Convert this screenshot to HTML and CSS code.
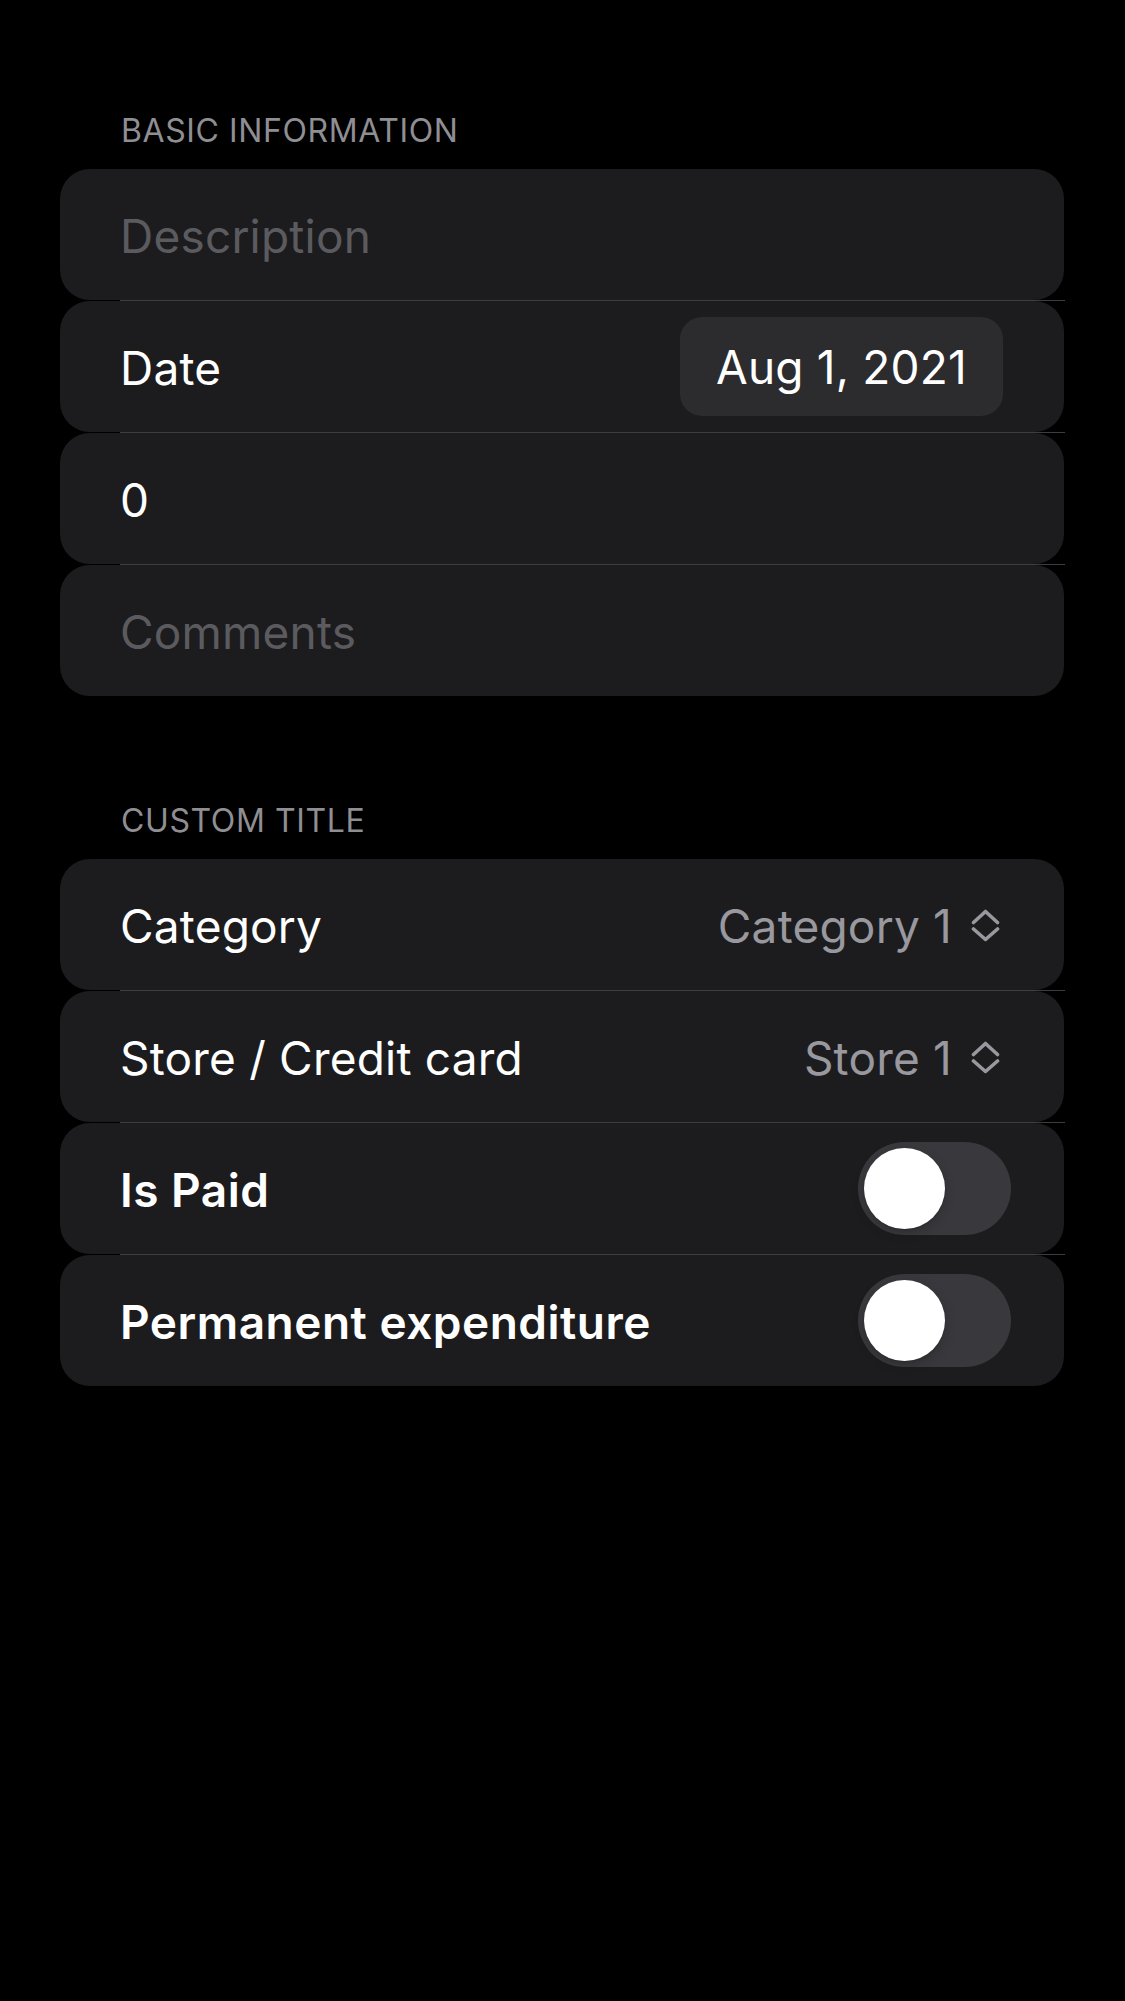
FILE: index.html
```html
<!DOCTYPE html>
<html lang="en">
<head>
<meta charset="utf-8">
<title>Expense form</title>
<link rel="stylesheet" href="styles.css">
</head>
<body>
<main class="form">
  <section class="group">
    <h2 class="group-title">BASIC INFORMATION</h2>
    <div class="rows">
      <div class="row"><span class="placeholder">Description</span></div>
      <div class="sep"></div>
      <div class="row">
        <span class="label">Date</span>
        <span class="pill">Aug 1, 2021</span>
      </div>
      <div class="sep"></div>
      <div class="row"><span class="label">0</span></div>
      <div class="sep"></div>
      <div class="row"><span class="placeholder">Comments</span></div>
    </div>
  </section>

  <section class="group group-second">
    <h2 class="group-title">CUSTOM TITLE</h2>
    <div class="rows">
      <div class="row row-picker">
        <span class="label">Category</span>
        <span class="value">Category 1
          <svg class="updown" viewBox="0 0 29 33" width="29" height="33" aria-hidden="true">
            <polyline points="2.5,13.5 14.5,2.5 26.5,13.5" />
            <polyline points="2.5,20 14.5,30.5 26.5,20" />
          </svg>
        </span>
      </div>
      <div class="sep"></div>
      <div class="row row-picker">
        <span class="label">Store / Credit card</span>
        <span class="value">Store 1
          <svg class="updown" viewBox="0 0 29 33" width="29" height="33" aria-hidden="true">
            <polyline points="2.5,13.5 14.5,2.5 26.5,13.5" />
            <polyline points="2.5,20 14.5,30.5 26.5,20" />
          </svg>
        </span>
      </div>
      <div class="sep"></div>
      <div class="row row-toggle">
        <span class="label label-strong">Is Paid</span>
        <span class="switch"><span class="knob"></span></span>
      </div>
      <div class="sep"></div>
      <div class="row row-toggle">
        <span class="label label-strong">Permanent expenditure</span>
        <span class="switch"><span class="knob"></span></span>
      </div>
    </div>
  </section>
</main>
</body>
</html>
```

FILE: styles.css
```css
html, body {
  margin: 0;
  padding: 0;
  background: #000;
}

body {
  min-height: 2001px;
  font-family: Inter, "Noto Sans", "Liberation Sans", sans-serif;
  color: #fff;
}

.form {
  padding: 110px 61px 0 60px;
  width: 1004px;
}

.group-title {
  margin: 0 0 18px 0;
  padding: 1px 0 0 61px;
  font-size: 32px;
  line-height: 40px;
  font-weight: 400;
  color: #8e8e93;
  letter-spacing: 0.6px;
}

.group-second {
  margin-top: 104px;
}

.rows {
  display: flex;
  flex-direction: column;
}

.row {
  height: 131px;
  box-sizing: border-box;
  background: #1c1c1e;
  border-radius: 30px;
  display: flex;
  align-items: center;
  justify-content: space-between;
  padding: 2px 61px 0 60px;
  font-size: 46px;
  letter-spacing: 0.2px;
}

.sep {
  height: 1px;
  background: #3d3d40;
  margin-left: 60px;
  margin-right: -1px;
}

.placeholder {
  color: #5b5b5f;
}

.label {
  color: #fff;
}

.label-strong {
  font-weight: 600;
  letter-spacing: 0.5px;
}

.pill {
  background: #2c2c2f;
  border-radius: 22px;
  height: 99px;
  box-sizing: border-box;
  padding: 0 36px 0 36px;
  display: flex;
  align-items: center;
  margin-top: -2px;
}

.row-picker {
  padding-right: 64px;
}

.value {
  display: flex;
  align-items: center;
  gap: 19px;
  color: #98989e;
}

.updown {
  display: block;
  flex: none;
  fill: none;
  stroke: #98989e;
  stroke-width: 3.6;
  stroke-linecap: round;
  stroke-linejoin: round;
}

.row-toggle {
  padding-right: 53px;
}

.switch {
  width: 153px;
  height: 93px;
  border-radius: 47px;
  background: #39393d;
  display: flex;
  align-items: center;
  padding-left: 6px;
  box-sizing: border-box;
  margin-top: -2px;
}

.knob {
  width: 81px;
  height: 81px;
  border-radius: 50%;
  background: #fff;
  box-shadow: 0 4px 12px rgba(0, 0, 0, 0.18), 0 2px 2px rgba(0, 0, 0, 0.08);
}
```
